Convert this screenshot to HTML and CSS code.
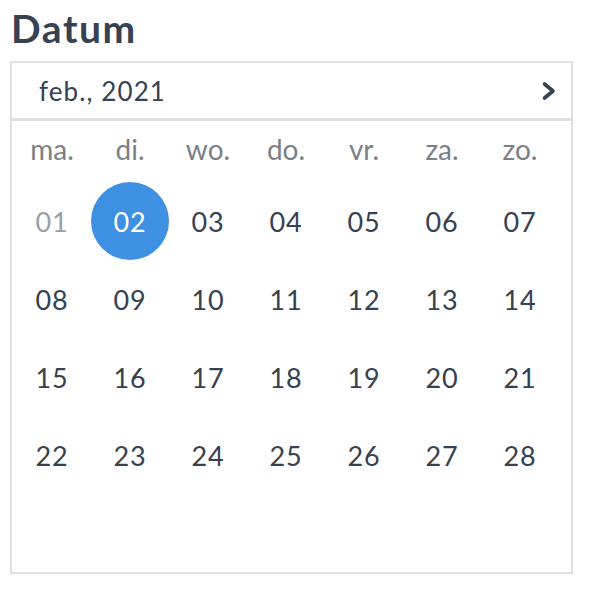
FILE: index.html
```html
<html>
  <head>
    <meta charset="UTF-8">
    <link rel="stylesheet" href="styles.css">
  </head>
  <body>
    <h1 class="label">Datum</h1>

    <div class="picker">
      <div class="picker-head">
        <span class="month">feb., 2021</span>
        <button class="next" aria-label="Volgende maand">
          <svg width="16" height="20" viewBox="0 0 16 20">
            <path d="M3.5 3 L12 10 L3.5 17" fill="none" stroke="#364152" stroke-width="3.6" stroke-linecap="round" stroke-linejoin="round"/>
          </svg>
        </button>
      </div>

      <div class="weekdays">
        <span>ma.</span><span>di.</span><span>wo.</span><span>do.</span><span>vr.</span><span>za.</span><span>zo.</span>
      </div>

      <div class="days">
        <span class="day past">01</span>
        <span class="day selected">02</span>
        <span class="day">03</span>
        <span class="day">04</span>
        <span class="day">05</span>
        <span class="day">06</span>
        <span class="day">07</span>
        <span class="day">08</span>
        <span class="day">09</span>
        <span class="day">10</span>
        <span class="day">11</span>
        <span class="day">12</span>
        <span class="day">13</span>
        <span class="day">14</span>
        <span class="day">15</span>
        <span class="day">16</span>
        <span class="day">17</span>
        <span class="day">18</span>
        <span class="day">19</span>
        <span class="day">20</span>
        <span class="day">21</span>
        <span class="day">22</span>
        <span class="day">23</span>
        <span class="day">24</span>
        <span class="day">25</span>
        <span class="day">26</span>
        <span class="day">27</span>
        <span class="day">28</span>
        <span class="day empty"></span>
      </div>
    </div>
  </body>
</html>
```

FILE: styles.css
```css
body {
  margin: 0;
  padding: 5px 0 0 10px;
  font-family: "Source Sans Pro", Lato, "Liberation Sans", sans-serif;
  color: #364152;
  background: #fff;
}

.label {
  margin: 0 0 10px 1px;
  font-size: 39px;
  font-weight: bold;
  letter-spacing: 1.6px;
  line-height: 46px;
  color: #364152;
}

.picker {
  width: 559px;
  height: 509px;
  border: 2px solid #e0e0e0;
}

.picker-head {
  display: flex;
  align-items: center;
  justify-content: space-between;
  height: 55px;
  padding: 0 14px 0 27px;
  border-bottom: 3px solid #e0e0e0;
}

.month {
  font-size: 26px;
  letter-spacing: 1.1px;
}

.next {
  border: none;
  background: none;
  padding: 0;
  display: flex;
}

.weekdays {
  display: grid;
  grid-template-columns: repeat(7, 78px);
  box-sizing: border-box;
  height: 61px;
  padding: 0 0 6px 1px;
  align-items: center;
  font-size: 28px;
  color: #7b7f86;
}

.weekdays span {
  text-align: center;
}

.days {
  display: grid;
  grid-template-columns: repeat(7, 78px);
  grid-auto-rows: 78px;
  padding-left: 1px;
}

.day {
  display: flex;
  align-items: center;
  justify-content: center;
  font-size: 27px;
  letter-spacing: 0.8px;
  border-radius: 50%;
}

.past {
  color: #9a9ea6;
}

.selected {
  background: #3d90e2;
  color: #fff;
}
```
